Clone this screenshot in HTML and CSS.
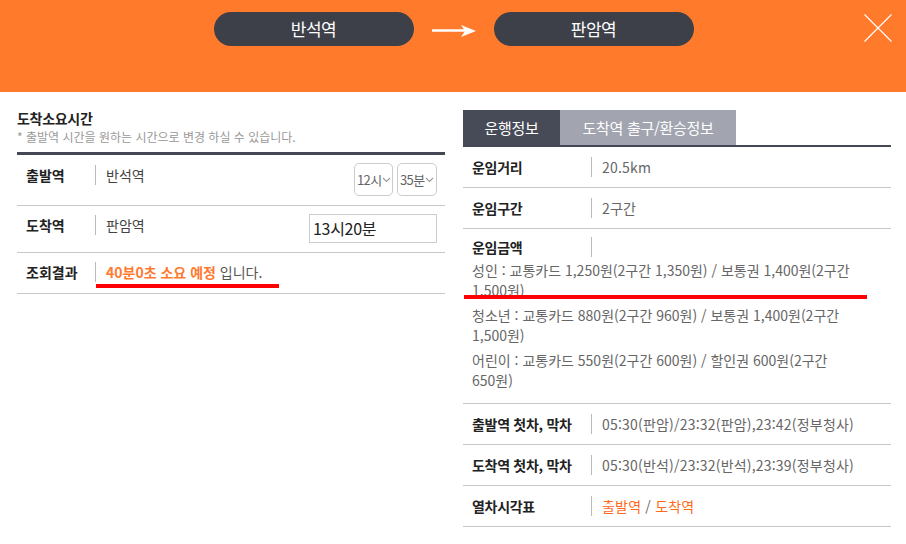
FILE: index.html
```html
<!DOCTYPE html>
<html lang="ko">
<head>
<meta charset="utf-8">
<title>도착소요시간</title>
<link rel="stylesheet" href="styles.css">
</head>
<body>
<header class="top">
  <div class="route">
    <div class="pill">반석역</div>
    <svg class="arrow" width="44" height="14" viewBox="0 0 44 14"><path d="M0 6.5 H38" stroke="#fff" stroke-width="2.6"/><path d="M29 1 L44 7 L29 13 L33 7 Z" fill="#fff"/></svg>
    <div class="pill">판암역</div>
  </div>
  <button class="close" aria-label="닫기"><svg width="28" height="28" viewBox="0 0 28 28"><path d="M0.5 0.5 L27.5 27.5 M27.5 0.5 L0.5 27.5" stroke="#fff" stroke-width="1.1" fill="none"/></svg></button>
</header>

<main class="content">
  <section class="left">
    <h2 class="title">도착소요시간</h2>
    <p class="note">* 출발역 시간을 원하는 시간으로 변경 하실 수 있습니다.</p>
    <div class="ltable">
      <div class="lrow r1">
        <div class="llabel">출발역</div>
        <div class="lsep"></div>
        <div class="lval">반석역</div>
        <div class="selects">
          <span class="sel">12시<svg width="9" height="6" viewBox="0 0 9 6"><path d="M1 1 L4.5 4.5 L8 1" stroke="#999" stroke-width="1.1" fill="none"/></svg></span>
          <span class="sel">35분<svg width="9" height="6" viewBox="0 0 9 6"><path d="M1 1 L4.5 4.5 L8 1" stroke="#999" stroke-width="1.1" fill="none"/></svg></span>
        </div>
      </div>
      <div class="lrow r2">
        <div class="llabel">도착역</div>
        <div class="lsep"></div>
        <div class="lval">판암역</div>
        <div class="inputbox">13시20분</div>
      </div>
      <div class="lrow r3">
        <div class="llabel">조회결과</div>
        <div class="lsep"></div>
        <div class="lval result"><strong>40분0초 소요 예정</strong> 입니다.<span class="mark mark-left"></span></div>
      </div>
    </div>
  </section>

  <section class="right">
    <div class="tabs">
      <div class="tab active">운행정보</div>
      <div class="tab">도착역 출구/환승정보</div>
    </div>
    <div class="rtable">
      <div class="rrow">
        <div class="rlabel">운임거리</div><div class="rsep"></div><div class="rval">20.5km</div>
      </div>
      <div class="rrow">
        <div class="rlabel">운임구간</div><div class="rsep"></div><div class="rval">2구간</div>
      </div>
      <div class="rrow fare">
        <div class="fare-head"><div class="rlabel">운임금액</div><div class="rsep"></div></div>
        <p class="fare-line">성인 : 교통카드 1,250원(2구간 1,350원) / 보통권 1,400원(2구간<br>1,500원)<span class="mark mark-right"></span></p>
        <p class="fare-line">청소년 : 교통카드 880원(2구간 960원) / 보통권 1,400원(2구간<br>1,500원)</p>
        <p class="fare-line">어린이 : 교통카드 550원(2구간 600원) / 할인권 600원(2구간<br>650원)</p>
      </div>
      <div class="rrow">
        <div class="rlabel">출발역 첫차, 막차</div><div class="rsep"></div><div class="rval">05:30(판암)/23:32(판암),23:42(정부청사)</div>
      </div>
      <div class="rrow">
        <div class="rlabel">도착역 첫차, 막차</div><div class="rsep"></div><div class="rval">05:30(반석)/23:32(반석),23:39(정부청사)</div>
      </div>
      <div class="rrow">
        <div class="rlabel">열차시각표</div><div class="rsep"></div><div class="rval links"><a href="#">출발역</a> / <a href="#">도착역</a></div>
      </div>
    </div>
  </section>
</main>
</body>
</html>
```

FILE: styles.css
```css
* { box-sizing: border-box; }
html, body { margin: 0; padding: 0; background: #fff; }
body {
  font-family: "Noto Sans CJK KR", "Noto Sans", sans-serif;
  color: #333;
  width: 906px;
  height: 544px;
  overflow: hidden;
}

.top {
  position: relative;
  height: 92px;
  background: #ff7b2b;
  padding-top: 12px;
}
.route {
  display: flex;
  justify-content: center;
  align-items: center;
  gap: 18px;
  padding-left: 1px;
}
.pill {
  width: 200px;
  height: 34px;
  border-radius: 17px;
  background: #3d4049;
  color: #fff;
  font-size: 17px;
  line-height: 34px;
  text-align: center;
  letter-spacing: -0.5px;
}
.arrow { display: block; margin-top: 3px; }
.close {
  position: absolute;
  top: 14px;
  right: 14px;
  width: 28px;
  height: 28px;
  padding: 0;
  border: 0;
  background: none;
}
.close svg { display: block; }

.content {
  display: flex;
  gap: 18px;
  padding: 16px 0 0 17px;
}
.left, .right { width: 428px; }

.title {
  margin: 0;
  font-size: 14px;
  line-height: 20px;
  font-weight: 700;
  color: #222;
  letter-spacing: -0.3px;
}
.note {
  margin: 0;
  font-size: 12px;
  line-height: 18px;
  color: #999;
  letter-spacing: 0;
}
.ltable {
  margin-top: 6px;
  border-top: 3px solid #444854;
}
.lrow {
  display: flex;
  align-items: flex-start;
  border-bottom: 1px solid #c8c8c8;
  padding-left: 9px;
  padding-right: 8px;
  font-size: 14px;
  line-height: 20px;
}
.lrow.r1 { height: 51px; padding-top: 10px; }
.lrow.r2 { height: 47px; padding-top: 9px; }
.lrow.r3 { height: 41px; padding-top: 9px; }
.llabel {
  width: 69px;
  font-weight: 700;
  color: #222;
}
.lsep { width: 1px; height: 20px; background: #bbb; }
.lval {
  position: relative;
  padding-left: 10px;
  color: #444;
}
.selects {
  margin-left: auto;
  margin-top: -2px;
  display: flex;
  gap: 4px;
}
.sel {
  display: flex;
  align-items: center;
  height: 33px;
  padding-left: 2px;
  border: 1px solid #ccc;
  border-radius: 5px;
  font-size: 13px;
  color: #666;
  letter-spacing: -0.6px;
}
.sel:first-child { width: 39px; }
.sel:last-child { width: 40px; }
.inputbox {
  margin-left: auto;
  margin-top: -1px;
  width: 128px;
  height: 29px;
  border: 1px solid #ccc;
  padding-left: 3px;
  font-size: 16px;
  line-height: 27px;
  color: #222;
  letter-spacing: -0.3px;
}
.result { color: #555; }
.result strong { color: #ff7a30; font-weight: 700; }
.mark {
  position: absolute;
  height: 4px;
  background: #ff0000;
}
.mark-left { left: 0; top: 22px; width: 183px; }

.tabs {
  display: flex;
  margin-top: 2px;
  height: 35px;
}
.tab {
  height: 35px;
  line-height: 35px;
  font-size: 15px;
  color: #fff;
  text-align: center;
  background: #a2a5b0;
  width: 176px;
  letter-spacing: -0.3px;
}
.tab.active { width: 97px; background: #474b58; }
.rtable { border-top: 2px solid #444854; }
.rrow {
  display: flex;
  align-items: center;
  height: 41px;
  border-bottom: 1px solid #c8c8c8;
  padding-left: 9px;
  font-size: 14px;
  line-height: 20px;
}
.rlabel {
  width: 119px;
  font-weight: 700;
  color: #222;
  letter-spacing: -0.3px;
}
.rsep { width: 1px; height: 20px; background: #bbb; }
.rval {
  padding-left: 10px;
  color: #666;
  letter-spacing: 0.2px;
}
.rrow.fare {
  display: block;
  height: auto;
  padding-top: 8px;
  padding-bottom: 13px;
}
.fare-head { display: flex; }
.fare-line {
  position: relative;
  margin: 5px 0 0;
  color: #666;
  white-space: nowrap;
}
.fare-head + .fare-line { margin-top: 3px; }
.mark-right { left: -8px; top: 35px; width: 403px; }
.links a { color: #ff6a1a; text-decoration: none; }
```
